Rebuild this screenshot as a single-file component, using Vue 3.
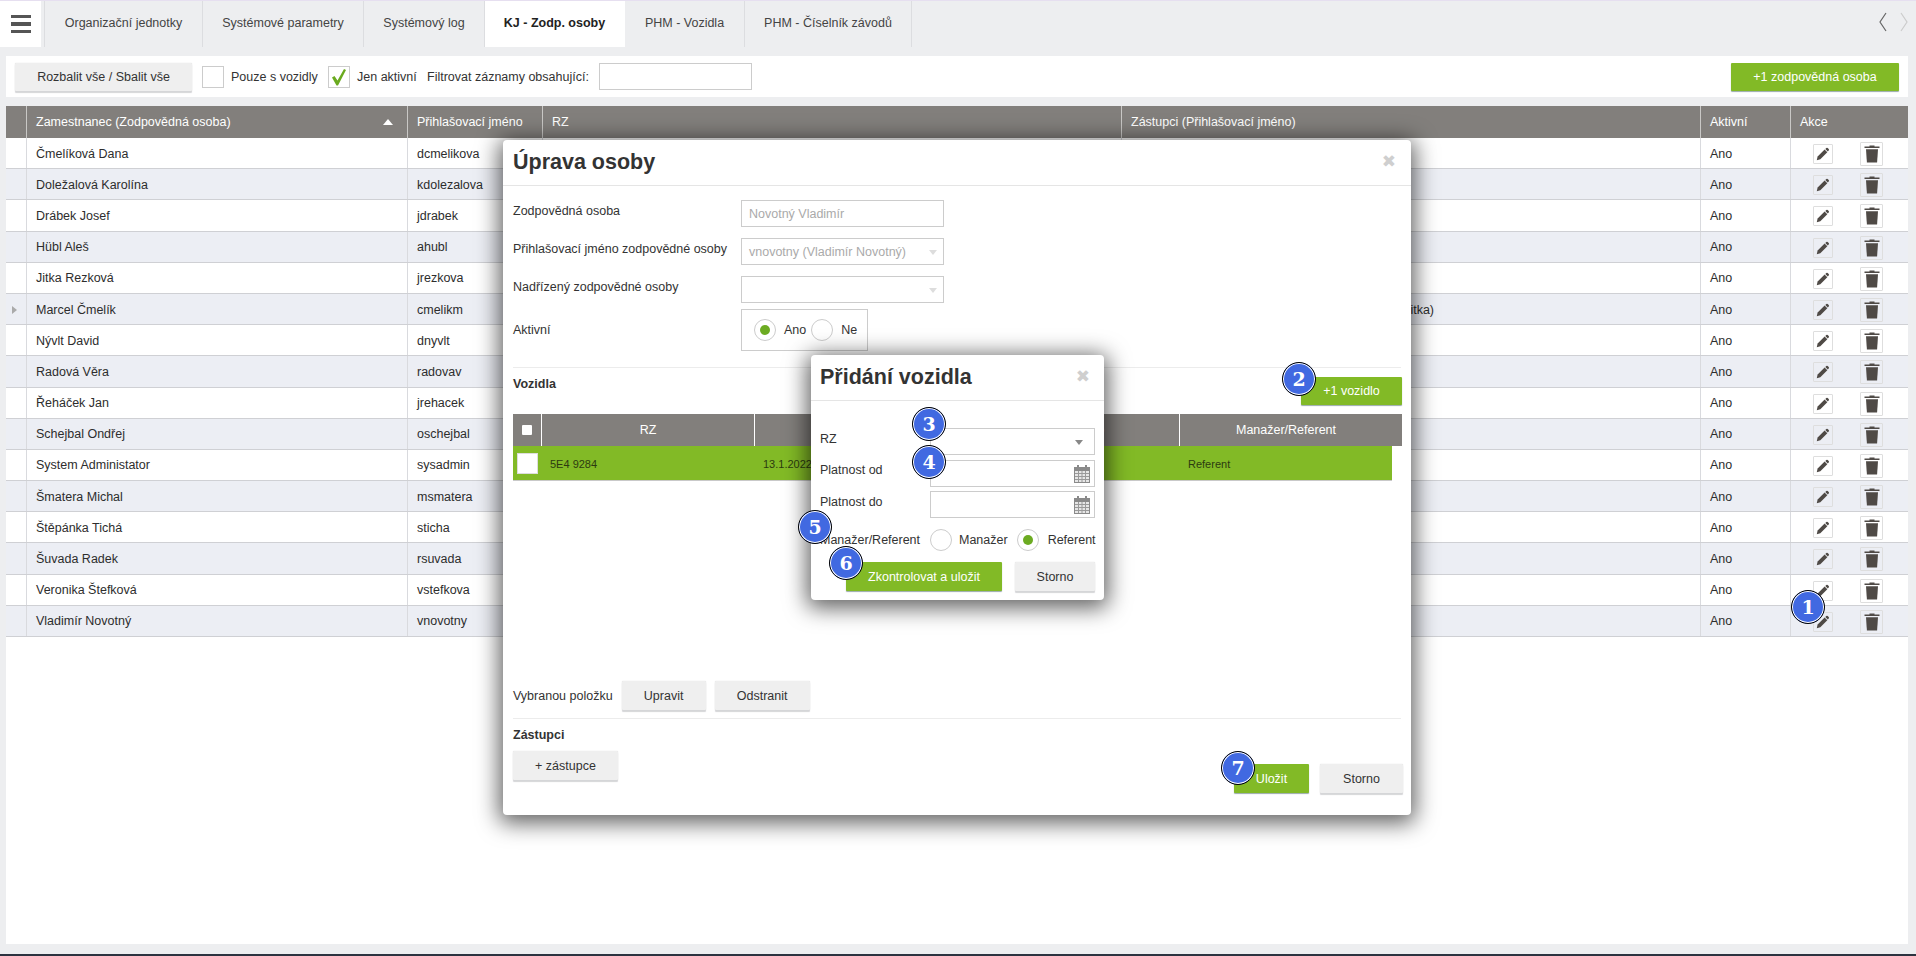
<script setup>
const tabs = [
  { t: 'Organizační jednotky', w: 158 },
  { t: 'Systémové parametry', w: 161 },
  { t: 'Systémový log', w: 121 },
  { t: 'KJ - Zodp. osoby', w: 140, active: true },
  { t: 'PHM - Vozidla', w: 120 },
  { t: 'PHM - Číselník závodů', w: 167 },
]
const rows = [
  ['Čmelíková Dana', 'dcmelikova'],
  ['Doležalová Karolína', 'kdolezalova'],
  ['Drábek Josef', 'jdrabek'],
  ['Hübl Aleš', 'ahubl'],
  ['Jitka Rezková', 'jrezkova'],
  ['Marcel Čmelík', 'cmelikm', 'Rezková Jitka (jrezkova) Rezková (Jitka)'],
  ['Nývlt David', 'dnyvlt'],
  ['Radová Věra', 'radovav'],
  ['Řeháček Jan', 'jrehacek'],
  ['Schejbal Ondřej', 'oschejbal'],
  ['System Administator', 'sysadmin'],
  ['Šmatera Michal', 'msmatera'],
  ['Štěpánka Tichá', 'sticha'],
  ['Šuvada Radek', 'rsuvada'],
  ['Veronika Štefková', 'vstefkova'],
  ['Vladimír Novotný', 'vnovotny'],
]
const badges = [
  { n: 1, x: 1808, y: 606 },
  { n: 2, x: 1299, y: 378 },
  { n: 3, x: 929, y: 423 },
  { n: 4, x: 929, y: 461 },
  { n: 5, x: 815, y: 526 },
  { n: 6, x: 846, y: 562 },
  { n: 7, x: 1238, y: 767 },
]
</script>

<template>
  <div class="page">
    <nav class="tabbar">
      <button class="burger" aria-label="Menu">
        <span></span><span></span><span></span>
      </button>
      <div class="tabs">
        <div
          v-for="tab in tabs"
          :key="tab.t"
          class="tab"
          :class="{ active: tab.active }"
          :style="{ width: tab.w + 'px' }"
        >{{ tab.t }}</div>
      </div>
      <div class="arrows">
        <svg width="12" height="22" viewBox="0 0 12 22"><path d="M9 2 3 11l6 9" fill="none" stroke="#666" stroke-width="1.2"/></svg>
        <svg width="12" height="22" viewBox="0 0 12 22"><path d="m3 2 6 9-6 9" fill="none" stroke="#ccc" stroke-width="1.2"/></svg>
      </div>
    </nav>

    <div class="toolbar">
      <button class="btn gray expand">Rozbalit vše / Sbalit vše</button>
      <span class="check"></span>
      <span class="check-label first">Pouze s vozidly</span>
      <span class="check">
        <svg width="18" height="20" viewBox="0 0 18 20"><path d="M2 10.500 4.500 9 7.500 13.500 14 2 16 3 8 18.500H6.500z" fill="#6aaa1f"/></svg>
      </span>
      <span class="check-label second">Jen aktivní</span>
      <span class="filter-label">Filtrovat záznamy obsahující:</span>
      <span class="input filter-input"></span>
      <button class="btn green add-person">+1 zodpovědná osoba</button>
    </div>

    <main class="content">
      <div class="grid head">
        <div class="cell"></div>
        <div class="cell sort">Zamestnanec (Zodpovědná osoba)<i class="sort-arrow"></i></div>
        <div class="cell">Přihlašovací jméno</div>
        <div class="cell">RZ</div>
        <div class="cell">Zástupci (Přihlašovací jméno)</div>
        <div class="cell">Aktivní</div>
        <div class="cell">Akce</div>
      </div>
      <div v-for="(r, i) in rows" :key="r[0]" class="grid row" :class="{ odd: i % 2 === 1 }">
        <div class="cell"><i v-if="r[2]" class="expander"></i></div>
        <div class="cell">{{ r[0] }}</div>
        <div class="cell">{{ r[1] }}</div>
        <div class="cell"></div>
        <div class="cell deputy">{{ r[2] }}</div>
        <div class="cell">Ano</div>
        <div class="cell actions">
          <span class="icon-box edit">
            <svg width="14" height="14" viewBox="0 0 14 14"><path d="M.8 13.200 1.600 9.600 8.600 2.600 11.300 5.300 4.300 12.300z" fill="#4f4a46"/><path d="M9.300 1.900 10.300 1a1 1 0 0 1 1.400 0l1 1a1 1 0 0 1 0 1.400l-.9 1z" fill="#4f4a46"/></svg>
          </span>
          <span class="icon-box trash">
            <svg width="16" height="18" viewBox="0 0 16 18"><path d="M5.500 1.500V.5h5v1H15.500V3H.5V1.500z" fill="#4f4a46"/><path d="M2 4.200h12l-.9 13.300H2.900z" fill="#4f4a46"/></svg>
          </span>
        </div>
      </div>
    </main>
    <div class="footer"></div>

    <section class="modal person">
      <header class="modal-head">
        <h2>Úprava osoby</h2>
        <span class="close">✖</span>
      </header>
      <div class="person-body">
        <div class="form">
          <label>Zodpovědná osoba</label>
          <div class="input field disabled">Novotný Vladimír</div>
          <label>Přihlašovací jméno zodpovědné osoby</label>
          <div class="input field disabled">vnovotny (Vladimír Novotný)<i class="caret light"></i></div>
          <label>Nadřízený zodpovědné osoby</label>
          <div class="input field"><i class="caret light"></i></div>
          <label class="active-label">Aktivní</label>
          <div class="radio-box">
            <span class="radio on"></span><span class="radio-text">Ano</span>
            <span class="radio"></span><span class="radio-text">Ne</span>
          </div>
        </div>
        <hr class="rule vehicles-rule" />
        <div class="vehicles-head">
          <strong>Vozidla</strong>
          <button class="btn green add-vehicle">+1 vozidlo</button>
        </div>
        <div class="v-grid v-head">
          <div class="v-cell"><i class="head-check"></i></div>
          <div class="v-cell">RZ</div>
          <div class="v-cell">Platnost od</div>
          <div class="v-cell">Platnost do</div>
          <div class="v-cell last">Manažer/Referent</div>
        </div>
        <div class="v-grid v-row">
          <div class="v-cell"><i class="row-check"></i></div>
          <div class="v-cell">5E4 9284</div>
          <div class="v-cell">13.1.2022</div>
          <div class="v-cell"></div>
          <div class="v-cell">Referent</div>
        </div>
        <div class="selected">
          <span>Vybranou položku</span>
          <button class="btn gray upravit">Upravit</button>
          <button class="btn gray odstranit">Odstranit</button>
        </div>
        <hr class="rule deputies-rule" />
        <strong class="deputies-title">Zástupci</strong>
        <div class="person-foot">
          <button class="btn gray add-deputy">+ zástupce</button>
          <div class="foot-right">
            <button class="btn green save">Uložit</button>
            <button class="btn gray storno">Storno</button>
          </div>
        </div>
      </div>
    </section>

    <section class="modal vehicle">
      <header class="modal-head">
        <h2>Přidání vozidla</h2>
        <span class="close">✖</span>
      </header>
      <div class="vehicle-body">
        <div class="v-line rz">
          <label>RZ</label>
          <div class="input vf"><i class="caret"></i></div>
        </div>
        <div class="v-line from">
          <label>Platnost od</label>
          <div class="input vf">
            <svg class="cal" width="16" height="18" viewBox="0 0 16 18"><rect x="0" y="2" width="16" height="16" fill="#8a8a8a"/><rect x="1" y="6" width="14" height="11" fill="#e6e6e6"/><g fill="#9a9a9a"><rect x="1" y="8" width="14" height="1"/><rect x="1" y="11" width="14" height="1"/><rect x="1" y="14" width="14" height="1"/><rect x="4" y="6" width="1" height="11"/><rect x="7.500" y="6" width="1" height="11"/><rect x="11" y="6" width="1" height="11"/></g><rect x="3" y="0" width="2" height="3" fill="#8a8a8a"/><rect x="11" y="0" width="2" height="3" fill="#8a8a8a"/></svg>
          </div>
        </div>
        <div class="v-line to">
          <label>Platnost do</label>
          <div class="input vf">
            <svg class="cal" width="16" height="18" viewBox="0 0 16 18"><rect x="0" y="2" width="16" height="16" fill="#8a8a8a"/><rect x="1" y="6" width="14" height="11" fill="#e6e6e6"/><g fill="#9a9a9a"><rect x="1" y="8" width="14" height="1"/><rect x="1" y="11" width="14" height="1"/><rect x="1" y="14" width="14" height="1"/><rect x="4" y="6" width="1" height="11"/><rect x="7.500" y="6" width="1" height="11"/><rect x="11" y="6" width="1" height="11"/></g><rect x="3" y="0" width="2" height="3" fill="#8a8a8a"/><rect x="11" y="0" width="2" height="3" fill="#8a8a8a"/></svg>
          </div>
        </div>
        <div class="v-line role">
          <label>Manažer/Referent</label>
          <div class="role-options">
            <span class="radio"></span><span class="role-text first">Manažer</span>
            <span class="radio on"></span><span class="role-text second">Referent</span>
          </div>
        </div>
        <div class="vehicle-foot">
          <button class="btn green check-save">Zkontrolovat a uložit</button>
          <button class="btn gray vehicle-storno">Storno</button>
        </div>
      </div>
    </section>

    <span
      v-for="b in badges"
      :key="b.n"
      class="badge"
      :style="{ left: b.x - 17 + 'px', top: b.y - 17 + 'px' }"
    >{{ b.n }}</span>
  </div>
</template>

<style>
html, body { margin: 0; background: #edeef0; }
</style>

<style scoped>
* { box-sizing: border-box; }
.page {
  position: relative;
  width: 1916px;
  height: 956px;
  overflow: hidden;
  background: #edeef0;
  border-top: 1px solid #e6dff0;
  font: 12.500px "Liberation Sans", Arial, sans-serif;
  color: #333;
  display: flex;
  flex-direction: column;
}
button { font: inherit; border: 0; padding: 0; margin: 0; }

.tabbar { display: flex; height: 46px; flex: none; }
.burger {
  width: 41px;
  background: #fff;
  display: flex;
  flex-direction: column;
  gap: 4px;
  align-items: center;
  justify-content: center;
  margin-right: 3px;
}
.burger span { width: 20px; height: 3.500px; background: #555; }
.tabs { display: flex; border-left: 1px solid #dcdde0; margin-left: 0; }
.tab {
  display: flex;
  align-items: center;
  justify-content: center;
  border-right: 1px solid #dcdde0;
  color: #444;
  padding-bottom: 3px;
}
.tab.active { background: #fff; color: #222; font-weight: 700; border-right-color: #fff; }
.arrows { margin-left: auto; display: flex; gap: 9px; padding: 10px 6px 0 0; align-items: flex-start; }

.toolbar {
  flex: none;
  margin: 9px 8px 0 6px;
  height: 41px;
  background: #fff;
  display: flex;
  align-items: center;
}
.btn {
  display: flex;
  align-items: center;
  justify-content: center;
  height: 29px;
  border-radius: 1px;
}
.btn.gray { background: #efefef; color: #333; box-shadow: 0 2px 1px #d5d6d8, 0 0 1px #ccc; }
.btn.green { background: #82ba26; color: #fff; box-shadow: 0 1px 1px #9aa; }
.expand { width: 177px; margin-left: 9px; height: 28px; }
.check {
  width: 22px;
  height: 22px;
  border: 1px solid #ccc;
  display: flex;
  align-items: center;
  justify-content: center;
  margin-left: 10px;
}
.check-label.first { margin-left: 7px; width: 87px; }
.check-label.second { margin-left: 7px; width: 70px; }
.filter-label { width: 172px; }
.input { border: 1px solid #ccc; background: #fff; position: relative; }
.filter-input { width: 153px; height: 27px; }
.add-person { width: 168px; margin-left: auto; margin-right: 9px; height: 28px; }

.content { flex: none; margin: 9px 8px 0 6px; height: 838px; background: #fff; }
.grid {
  display: grid;
  grid-template-columns: 20px 381px 135px 579px 579px 90px 118px;
}
.head { background: #827f7c; color: #fff; height: 32px; }
.head .cell { display: flex; align-items: center; padding-left: 9px; border-left: 1px solid #c9c8c6; }
.head .cell:first-child { border-left: 0; }
.sort { position: relative; }
.sort-arrow {
  position: absolute;
  right: 14px;
  top: 13px;
  border-left: 5px solid transparent;
  border-right: 5px solid transparent;
  border-bottom: 6px solid #fff;
}
.row { height: 31.200px; border-bottom: 1px solid #cfd0d4; }
.row.odd { background: #eceef4; }
.row .cell {
  display: flex;
  align-items: center;
  padding-left: 9px;
  padding-top: 1px;
  border-left: 1px solid #d9dade;
  color: #2d2d2d;
  min-width: 0;
  white-space: nowrap;
}
.row .cell:first-child { border-left: 0; padding-left: 6px; }
.row .deputy { padding-left: 0; justify-content: flex-end; padding-right: 266px; }
.expander {
  border-top: 4px solid transparent;
  border-bottom: 4px solid transparent;
  border-left: 5px solid #aaa;
}
.actions { padding-left: 0 !important; position: relative; }
.icon-box {
  position: absolute;
  display: flex;
  align-items: center;
  justify-content: center;
  border: 1px solid #dedede;
  border-radius: 1px;
}
.edit { left: 22px; top: 6px; width: 20px; height: 20px; }
.trash { left: 69px; top: 4px; width: 23px; height: 24px; }

.footer { flex: none; height: 10px; }
.page::after {
  content: "";
  position: absolute;
  left: 0;
  right: 0;
  bottom: 0;
  height: 2px;
  background: #2c3340;
}

.modal {
  position: absolute;
  background: #fff;
  border-radius: 4px;
  box-shadow: 0 4px 22px 4px rgba(0, 0, 0, 0.62);
}
.person { left: 503px; top: 139px; width: 908px; height: 675px; }
.vehicle { left: 811px; top: 354px; width: 293px; height: 245px; }
.modal-head {
  height: 46px;
  border-bottom: 1px solid #e5e5e5;
  display: flex;
  align-items: center;
  justify-content: space-between;
  padding: 0 15px 0 10px;
}
.vehicle .modal-head { padding-left: 9px; padding-right: 14px; }
h2 { margin: 0; font-size: 21.500px; font-weight: 700; color: #333; line-height: 1; }
.close { color: #cfcfcf; font-size: 17px; font-family: "DejaVu Sans", sans-serif; margin-top: -4px; }

.person-body { padding: 14px 9px 0 10px; }
.form {
  display: grid;
  grid-template-columns: 228px 203px;
  grid-template-rows: 27px 27px 27px auto;
  row-gap: 11px;
  justify-content: start;
}
.form label { padding-top: 4px; }
.form .active-label { padding-top: 14px; margin-top: -5px; }
.field { display: flex; align-items: center; padding-left: 7px; padding-top: 1px; }
.disabled { color: #aaa; }
.caret {
  position: absolute;
  right: 11px;
  top: 50%;
  margin-top: -2px;
  border-left: 4px solid transparent;
  border-right: 4px solid transparent;
  border-top: 5px solid #888;
}
.caret.light { border-top-color: #ddd; right: 6px; }
.radio-box {
  width: 127px;
  height: 42px;
  margin-top: -5px;
  border: 1px solid #ccc;
  display: flex;
  align-items: center;
  padding-left: 12px;
}
.radio {
  flex: none;
  width: 22px;
  height: 22px;
  border-radius: 50%;
  border: 1px solid #ccc;
  background: #fff;
  position: relative;
  display: block;
}
.radio.on::after {
  content: "";
  position: absolute;
  left: 5px;
  top: 5px;
  width: 10px;
  height: 10px;
  border-radius: 50%;
  background: #6cab22;
}
.radio-text { margin-left: 8px; margin-right: 5px; }
.rule { border: 0; border-top: 1px solid #ececec; margin: 0; width: 888px; }
.vehicles-rule { margin-top: 16px; }
.vehicles-head {
  height: 46px;
  display: flex;
  justify-content: space-between;
  width: 889px;
}
.vehicles-head strong { padding-top: 9px; }
.add-vehicle { width: 101px; height: 28px; margin-top: 9px; }
.v-grid {
  display: grid;
  grid-template-columns: 28px 213px 212px 213px 223px;
  width: 889px;
}
.v-head { height: 32px; background: #827f7c; color: #fff; }
.v-head .v-cell {
  display: flex;
  align-items: center;
  justify-content: center;
  border-left: 1px solid #fff;
}
.v-head .v-cell:first-child { border-left: 0; }
.v-head .v-cell.last { padding-right: 10px; }
.head-check { width: 10px; height: 10px; background: #fff; border-radius: 1px; }
.v-row {
  height: 35px;
  width: 879px;
  background: #82ba26;
  border-bottom: 1px solid #c9c9c9;
  font-size: 11px;
  color: #2c3a10;
}
.v-row .v-cell { display: flex; align-items: center; padding-left: 9px; padding-top: 1px; white-space: nowrap; }
.v-row .v-cell:first-child { padding-left: 4px; }
.row-check { width: 21px; height: 21px; background: #fff; border: 1px solid #ddd; flex: none; }
.selected { display: flex; align-items: center; margin-top: 200px; }
.upravit { width: 84px; margin-left: 9px; }
.odstranit { width: 95px; margin-left: 9px; }
.deputies-rule { margin-top: 8px; }
.deputies-title { display: block; margin-top: 9px; }
.person-foot { display: flex; justify-content: space-between; align-items: flex-start; width: 890px; margin-top: 9px; }
.add-deputy { width: 105px; }
.foot-right { display: flex; gap: 11px; margin-top: 13px; }
.save { width: 75px; }
.storno { width: 83px; }

.vehicle-body { padding: 27px 9px 0 9px; }
.v-line { display: flex; align-items: flex-start; position: relative; }
.v-line label { width: 110px; flex: none; }
.vf { width: 165px; height: 27px; }
.rz label { padding-top: 4px; }
.from { margin-top: 5px; }
.from label { padding-top: 3px; }
.to { margin-top: 4px; }
.to label { padding-top: 4px; }
.role { margin-top: 11px; align-items: center; height: 22px; white-space: nowrap; }
.role-options { display: flex; align-items: center; }
.role-text { margin-left: 7px; }
.role-text.first { margin-right: 9px; }
.role-text.second { margin-left: 9px; }
.cal { position: absolute; right: 4px; top: 4px; }
.vehicle-foot { display: flex; margin-top: 11px; margin-left: 26px; gap: 13px; }
.check-save { width: 156px; }
.vehicle-storno { width: 80px; }

.badge {
  position: absolute;
  width: 34px;
  height: 34px;
  border-radius: 50%;
  background: #4169e1;
  border: 1px solid #000;
  box-shadow: inset 0 0 0 1px #fff;
  color: #fff;
  font: 700 19px/32px "DejaVu Serif", serif;
  text-align: center;
}
</style>
